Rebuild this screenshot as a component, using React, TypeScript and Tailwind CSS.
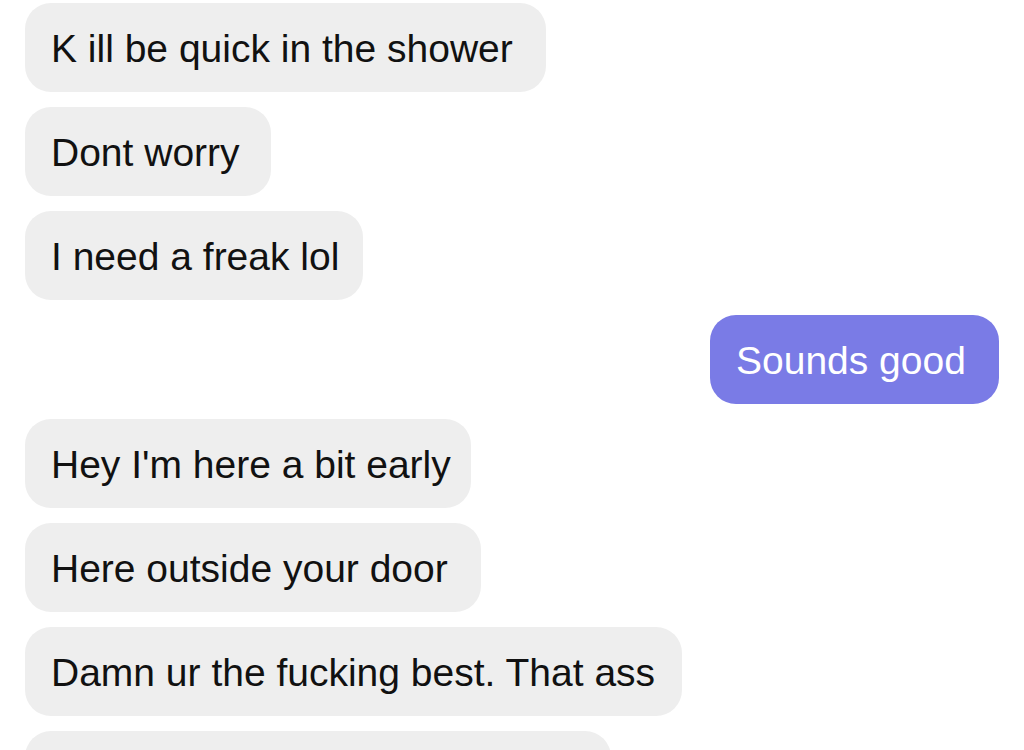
import React from "react"

type Msg = { id: number; text: string; mine?: boolean; w: string }

const messages: Msg[] = [
  { id: 1, text: "K ill be quick in the shower", w: "w-[521px]" },
  { id: 2, text: "Dont worry", w: "w-[246px]" },
  { id: 3, text: "I need a freak lol", w: "w-[338px]" },
  { id: 4, text: "Sounds good", mine: true, w: "w-[289px]" },
  { id: 5, text: "Hey I'm here a bit early", w: "w-[446px]" },
  { id: 6, text: "Here outside your door", w: "w-[456px]" },
  { id: 7, text: "Damn ur the fucking best. That ass", w: "w-[657px]" },
  { id: 8, text: "", w: "w-[586px]" },
]

function Bubble({ msg }: { msg: Msg }) {
  return (
    <div className={`flex ${msg.mine ? "justify-end" : "justify-start"}`}>
      <div
        className={`${msg.w} h-[89px] shrink-0 rounded-[26px] flex items-center px-[26px] pt-[3px] whitespace-nowrap overflow-hidden text-[39px] ${
          msg.mine ? "bg-[#7a7be6] text-white" : "bg-[#eeeeee] text-[#111111]"
        }`}
      >
        {msg.text}
      </div>
    </div>
  )
}

export default function App() {
  return (
    <div
      className="w-[1024px] h-[750px] overflow-hidden bg-white px-[25px] pt-[3px]"
      style={{ fontFamily: '"Liberation Sans", Arial, sans-serif' }}
    >
      <div className="flex flex-col gap-[15px]">
        {messages.map((m) => (
          <Bubble key={m.id} msg={m} />
        ))}
      </div>
    </div>
  )
}
